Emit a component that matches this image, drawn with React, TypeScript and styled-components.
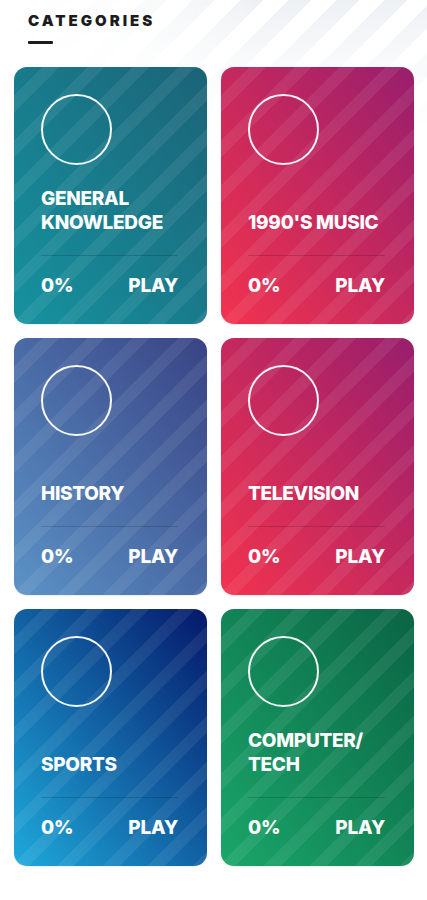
import React from "react";
import styled, { createGlobalStyle } from "styled-components";

const GlobalStyle = createGlobalStyle`
  html, body {
    margin: 0;
    padding: 0;
    background: #ffffff;
  }
  body {
    font-family: Inter, "Noto Sans", Roboto, sans-serif;
    -webkit-font-smoothing: antialiased;
  }
  * { box-sizing: border-box; }
`;

const Page = styled.div`
  width: 427px;
  min-height: 900px;
  background:
    linear-gradient(to bottom, rgba(255,255,255,0) 0px, rgba(255,255,255,0.6) 60px, #ffffff 130px),
    linear-gradient(to right, #ffffff 0px, rgba(255,255,255,0.85) 120px, rgba(255,255,255,0) 260px),
    repeating-linear-gradient(135deg, #eef1f4 0px, #eef1f4 16px, #ffffff 16px, #ffffff 34px);
  padding-top: 13px;
`;

const Header = styled.div`
  padding-left: 28px;
  display: flex;
  flex-direction: column;
  align-items: flex-start;
`;

const HeaderTitle = styled.h1`
  margin: 0;
  font-size: 15px;
  line-height: 15px;
  font-weight: 900;
  letter-spacing: 3px;
  color: #1c1c1e;
`;

const HeaderBar = styled.div`
  margin-top: 13px;
  width: 25px;
  height: 2.5px;
  background: #1c1c1e;
  border-radius: 1px;
`;

const Grid = styled.div`
  display: grid;
  grid-template-columns: 193px 193px;
  column-gap: 14px;
  row-gap: 14px;
  padding: 23px 13px 0 14px;
`;

const Card = styled.div<{ $from: string; $to: string }>`
  height: 257px;
  border-radius: 13px;
  padding: 27px 29px 26px 27px;
  display: flex;
  flex-direction: column;
  color: #fdfdfd;
  background:
    repeating-linear-gradient(
      135deg,
      rgba(255, 255, 255, 0) 0px,
      rgba(255, 255, 255, 0) 20px,
      rgba(255, 255, 255, 0.07) 20px,
      rgba(255, 255, 255, 0.07) 32px
    ),
    linear-gradient(to top right, ${(p) => p.$from}, ${(p) => p.$to});
  box-shadow: 0 1px 2px rgba(0, 0, 0, 0.08);
`;

const Ring = styled.div`
  width: 71px;
  height: 71px;
  border-radius: 50%;
  border: 2px solid rgba(255, 255, 255, 0.95);
  flex: none;
`;

const Spacer = styled.div`
  flex: 1;
`;

const Title = styled.div`
  font-size: 19px;
  line-height: 24px;
  font-weight: 800;
  letter-spacing: -0.3px;
  text-transform: uppercase;
`;

const Divider = styled.div`
  height: 1px;
  background: rgba(0, 0, 0, 0.16);
  margin: 20px 0 18px;
`;

const Footer = styled.div`
  display: flex;
  justify-content: space-between;
  align-items: center;
  font-size: 19px;
  line-height: 24px;
  font-weight: 800;
  letter-spacing: -0.2px;
`;

type Category = { title: string[]; from: string; to: string };

const categories: Category[] = [
  { title: ["General", "Knowledge"], from: "#16929f", to: "#1b6377" },
  { title: ["1990'S Music"], from: "#f2334f", to: "#981e6c" },
  { title: ["History"], from: "#5b93c6", to: "#394384" },
  { title: ["Television"], from: "#f2334f", to: "#981e6c" },
  { title: ["Sports"], from: "#1eaadb", to: "#05186a" },
  { title: ["Computer/", "Tech"], from: "#1aa66a", to: "#0a6444" },
];

export default function App() {
  return (
    <>
      <GlobalStyle />
      <Page>
        <Header>
          <HeaderTitle>CATEGORIES</HeaderTitle>
          <HeaderBar />
        </Header>
        <Grid>
          {categories.map((c, i) => (
            <Card key={i} $from={c.from} $to={c.to}>
              <Ring />
              <Spacer />
              <Title>
                {c.title.map((line, j) => (
                  <div key={j}>{line}</div>
                ))}
              </Title>
              <Divider />
              <Footer>
                <span>0%</span>
                <span>PLAY</span>
              </Footer>
            </Card>
          ))}
        </Grid>
      </Page>
    </>
  );
}
